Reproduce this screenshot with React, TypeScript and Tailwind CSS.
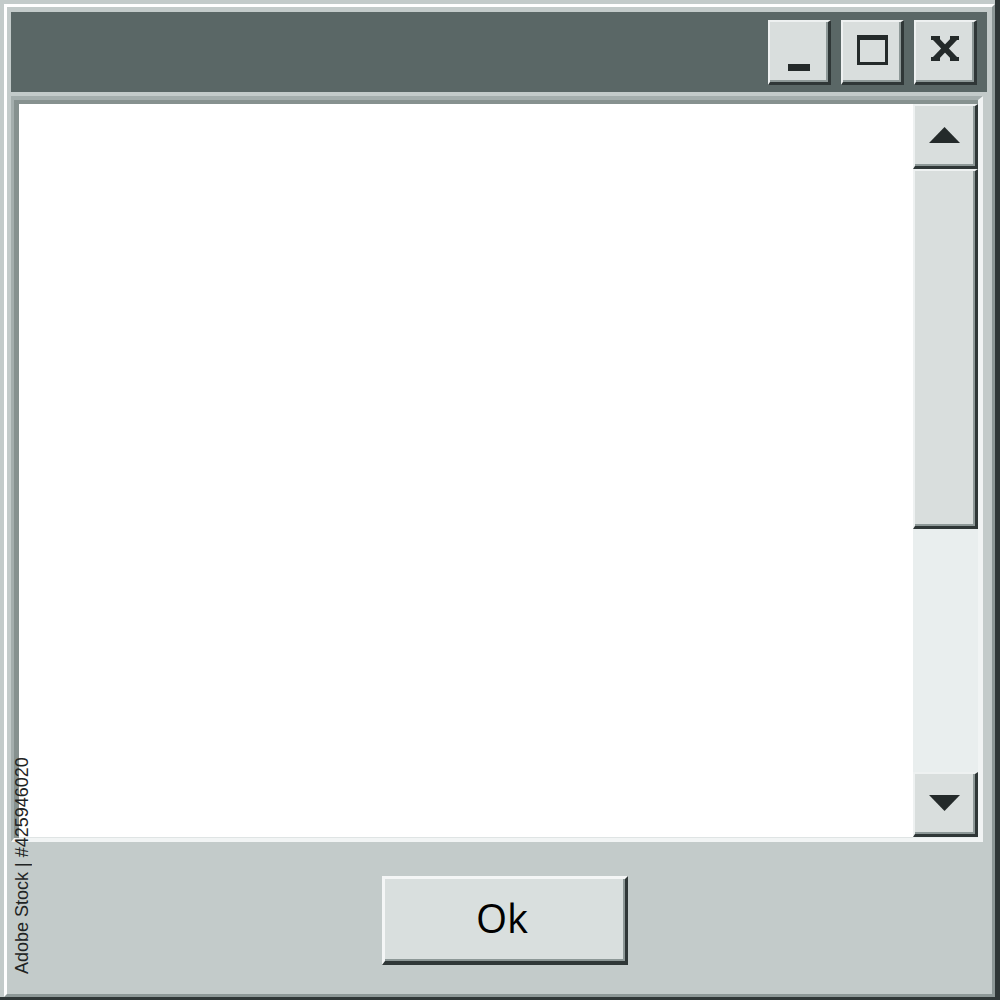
import React from "react";

function Bevel({ className = "", children }: { className?: string; children?: React.ReactNode }) {
  return (
    <div
      className={`border-t-2 border-l-2 border-r-[3px] border-b-[3px] border-t-[#eef1f1] border-l-[#eef1f1] border-r-[#2f3737] border-b-[#2f3737] ${className}`}
    >
      <div className="w-full h-full border-r-2 border-b-2 border-r-[#8d9897] border-b-[#8d9897] bg-[#d9dedd] flex items-center justify-center">
        {children}
      </div>
    </div>
  );
}

export default function App() {
  return (
    <div className="relative w-[1000px] h-[1000px] bg-[#c3cbca] pt-[4px] pl-[4px] border-r-[5px] border-b-[3px] border-[#2f3737] overflow-hidden">
      <div className="w-full h-full flex flex-col border-t-[3px] border-l-[3px] border-white border-r-[3px] border-b-[3px] border-r-[#8d9897] border-b-[#8d9897] pt-[4px] pl-[4px] pr-[5px]">
        {/* Title bar */}
        <div className="h-[80px] mt-[1px] bg-[#5a6766] flex items-start justify-end gap-[10px] pt-[8px] pr-[10px] shrink-0">
          <Bevel className="w-[63px] h-[65px]">
            <div className="w-full h-full flex items-end justify-center pb-[9px] pl-[1px]">
              <div className="w-[22px] h-[7px] bg-[#242a2a]" />
            </div>
          </Bevel>
          <Bevel className="w-[63px] h-[65px]">
            <div className="w-[31px] h-[30px] border-t-[5px] border-l-[3px] border-r-[3px] border-b-[3px] border-[#242a2a] mt-[-2px] ml-[2px]" />
          </Bevel>
          <Bevel className="w-[63px] h-[65px]">
            <svg width="28" height="25" viewBox="0 0 28 25" className="mt-[-6px] ml-[2px]">
              <g fill="#242a2a">
                <rect x="0" y="0" width="9" height="4" />
                <rect x="19" y="0" width="9" height="4" />
                <rect x="0" y="21" width="9" height="4" />
                <rect x="19" y="21" width="9" height="4" />
              </g>
              <g stroke="#242a2a" strokeWidth="5.5">
                <line x1="4" y1="2" x2="24" y2="23" />
                <line x1="24" y1="2" x2="4" y2="23" />
              </g>
            </svg>
          </Bevel>
        </div>

        {/* Content frame */}
        <div className="mt-[4px] mr-[4px] h-[746px] shrink-0 border-t-[4px] border-l-[3px] border-t-[#a4aead] border-l-[#a4aead] border-r-[5px] border-b-[4px] border-r-[#f1f4f4] border-b-[#f1f4f4]">
          <div className="w-full h-full border-t-[4px] border-l-[5px] border-[#86918f] flex">
            <div className="flex-1 bg-white border-b border-[#dfe4e4]" />
            <div className="w-[65px] flex flex-col bg-[#e9eeee]">
              <Bevel className="w-[65px] h-[65px] shrink-0">
                <svg width="31" height="16" viewBox="0 0 31 16">
                  <path d="M15.5 0 L31 16 H0 Z" fill="#242a2a" />
                </svg>
              </Bevel>
              <Bevel className="w-[65px] h-[360px] shrink-0" />
              <div className="flex-1" />
              <Bevel className="w-[65px] h-[65px] shrink-0 mb-[1px]">
                <svg width="31" height="16" viewBox="0 0 31 16">
                  <path d="M0 0 H31 L15.5 16 Z" fill="#242a2a" />
                </svg>
              </Bevel>
            </div>
          </div>
        </div>

        {/* Bottom panel */}
        <div className="flex-1 flex items-center justify-center pl-[12px] pt-[4px]">
          <div className="w-[246px] h-[89px] border-t-[3px] border-l-[3px] border-t-[#f4f6f6] border-l-[#f4f6f6] border-r-[3px] border-b-[4px] border-r-[#2f3737] border-b-[#2f3737]">
            <div className="w-full h-full border-r-2 border-b-2 border-r-[#8d9897] border-b-[#8d9897] bg-[#d9dfde] flex items-center justify-center">
              <span className="text-[40px] leading-none text-black font-['Open_Sans',Arial,sans-serif] mt-[-2px] mr-[4px]">Ok</span>
            </div>
          </div>
        </div>
      </div>

      {/* Vertical watermark text */}
      <div className="absolute left-[13px] top-[758px] h-[216px] flex items-center justify-center [writing-mode:vertical-rl] rotate-180 text-[18px] leading-none text-[#1f2424] font-['Liberation_Sans',Arial,sans-serif] whitespace-nowrap">
        Adobe Stock | #425946020
      </div>
    </div>
  );
}
